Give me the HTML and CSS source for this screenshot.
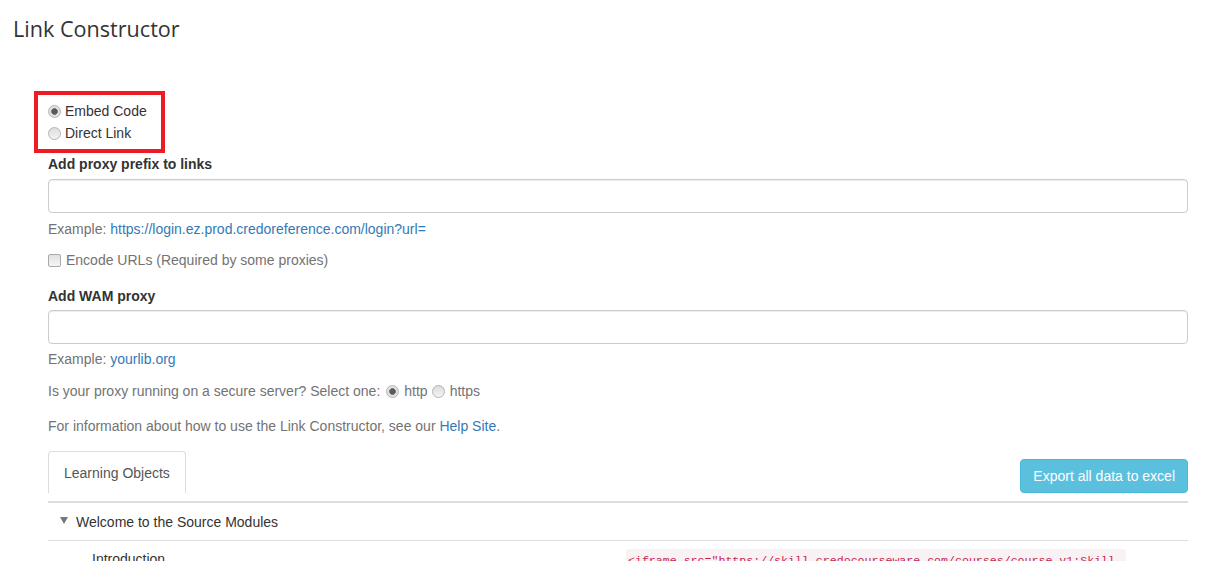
FILE: index.html
```html
<!DOCTYPE html>
<html>
<head>
<meta charset="utf-8">
<link rel="stylesheet" href="styles.css">
</head>
<body>
<h1 class="title">Link Constructor</h1>
<div class="content">
  <div class="highlight">
    <label class="radio-row"><input class="rad" type="radio" name="mode" checked> Embed Code</label>
    <label class="radio-row"><input class="rad" type="radio" name="mode"> Direct Link</label>
  </div>
  <div class="field">
    <label class="field-label">Add proxy prefix to links</label>
    <input class="text-input" type="text">
    <p class="help">Example: <a href="#">https://login.ez.prod.credoreference.com/login?url=</a></p>
  </div>
  <label class="check-row"><input class="chk" type="checkbox"> Encode URLs (Required by some proxies)</label>
  <div class="field wam">
    <label class="field-label">Add WAM proxy</label>
    <input class="text-input" type="text">
    <p class="help">Example: <a href="#">yourlib.org</a></p>
  </div>
  <p class="note">Is your proxy running on a secure server? Select one: <input class="rad small" type="radio" name="proto" checked>http<input class="rad small" type="radio" name="proto">https</p>
  <p class="note info">For information about how to use the Link Constructor, see our <a href="#">Help Site</a>.</p>
  <div class="tabbar">
    <div class="tab">Learning Objects</div>
    <button class="export">Export all data to excel</button>
  </div>
  <div class="section">
    <div class="section-head"><span class="caret"></span>Welcome to the Source Modules</div>
    <div class="row">
      <div class="row-name">Introduction</div>
      <code class="snippet">&lt;iframe src="https://skill.credocourseware.com/courses/course-v1:Skill-</code>
    </div>
  </div>
</div>
</body>
</html>
```
FILE: styles.css
```css
html, body {
  margin: 0;
  padding: 0;
  background: #fff;
}
body {
  font-family: "Liberation Sans", Arial, sans-serif;
  font-size: 14px;
  line-height: 20px;
  color: #333;
  overflow: hidden;
  height: 561px;
}
a {
  color: #337ab7;
  text-decoration: none;
}
.title {
  font-family: "Open Sans", sans-serif;
  font-weight: 400;
  font-size: 21.6px;
  line-height: 30px;
  color: #333;
  margin: 0;
  padding: 14px 0 0 13px;
}
.content {
  padding: 0 24px 0 48px;
}
.highlight {
  margin: 47px 0 0 -14px;
  width: 113px;
  border: 4px solid #ed1c24;
  padding: 5px 0 5px 10px;
  display: flex;
  flex-direction: column;
}
.radio-row {
  display: flex;
  align-items: center;
  height: 22px;
  color: #333;
}
.rad {
  -webkit-appearance: none;
  appearance: none;
  box-sizing: border-box;
  width: 13px;
  height: 13px;
  margin: 0 4px 0 0;
  border: 1px solid #b4b4b4;
  border-radius: 50%;
  background: linear-gradient(#dcdcdc, #f4f4f4);
  flex: none;
}
.rad:checked {
  background: radial-gradient(circle, #5a5a5a 0 2.6px, #8a8a8a 3.2px, #dcdcdc 3.6px, #eeeeee 100%);
}
.chk {
  -webkit-appearance: none;
  appearance: none;
  box-sizing: border-box;
  width: 13px;
  height: 13px;
  margin: 0 5px 0 0;
  border: 1px solid #a9a9a9;
  border-radius: 2px;
  background: linear-gradient(#e0e0e0, #f6f6f6);
  flex: none;
}
.field {
  margin-top: 1px;
}
.field-label {
  display: block;
  font-weight: 700;
  color: #333;
  height: 20px;
  line-height: 20px;
  margin-bottom: 5px;
}
.text-input {
  display: block;
  box-sizing: border-box;
  width: 100%;
  height: 34px;
  border: 1px solid #ccc;
  border-radius: 4px;
  margin: 0;
  box-shadow: inset 0 1px 1px rgba(0,0,0,.075);
}
.help {
  margin: 6px 0 0;
  color: #737373;
}
.check-row {
  display: flex;
  align-items: center;
  margin-top: 11px;
  color: #737373;
}
.wam {
  margin-top: 16px;
}
.wam .field-label {
  margin-bottom: 4px;
}
.wam .help {
  margin-top: 5px;
}
.note {
  margin: 12px 0 0;
  color: #737373;
  display: flex;
  align-items: center;
}
.note .rad {
  margin: 0 5px 0 6px;
}
.note .rad + .rad {
  margin-left: 4px;
}
.info {
  display: block;
  margin-top: 15px;
}
.tabbar {
  margin-top: 15px;
  display: flex;
  justify-content: space-between;
  align-items: flex-start;
  border-bottom: 2px solid #ddd;
  height: 50px;
}
.tab {
  box-sizing: border-box;
  height: 42px;
  padding: 11px 15px;
  border: 1px solid #ddd;
  border-bottom: none;
  border-radius: 4px 4px 0 0;
  color: #555;
}
.export {
  margin-top: 8px;
  height: 34px;
  padding: 6px 12px;
  background: #5bc0de;
  border: 1px solid #46b8da;
  border-radius: 4px;
  color: #fff;
  font-family: "Liberation Sans", Arial, sans-serif;
  font-size: 14px;
}
.section-head {
  height: 37px;
  display: flex;
  align-items: center;
  border-bottom: 1px solid #ddd;
  color: #333;
}
.caret {
  width: 0;
  height: 0;
  border-left: 4px solid transparent;
  border-right: 4px solid transparent;
  border-top: 7px solid #777;
  margin: -3px 8px 0 12px;
}
.row {
  display: flex;
  align-items: baseline;
  padding-top: 8px;
}
.row-name {
  width: 578px;
  padding-left: 44px;
  box-sizing: border-box;
  flex: none;
}
.snippet {
  font-family: "Liberation Mono", monospace;
  font-size: 11.6px;
  color: #c7254e;
  background: #f9f2f4;
  padding: 2px 4px 2px 2px;
  border-radius: 4px;
  white-space: nowrap;
}
```
